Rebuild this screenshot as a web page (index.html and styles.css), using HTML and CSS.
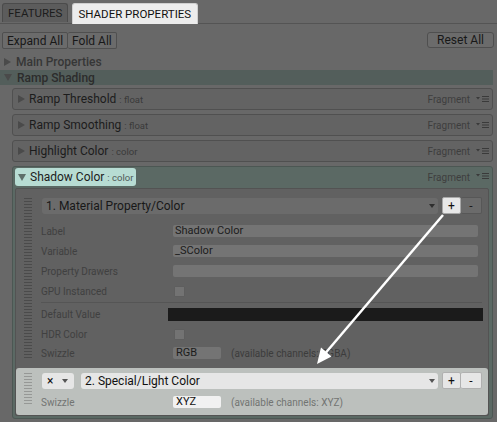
FILE: index.html
```html
<!DOCTYPE html>
<html>
<head>
<meta charset="utf-8">
<link rel="stylesheet" href="styles.css">
</head>
<body>
<div class="tabs">
  <div class="tab">FEATURES</div>
  <div class="tab active">SHADER PROPERTIES</div>
</div>
<div class="toolbar">
  <div class="btn-group">
    <div class="btn">Expand All</div>
    <div class="btn">Fold All</div>
  </div>
  <div class="btn reset">Reset All</div>
</div>
<div class="section"><span class="tri right"></span>Main Properties</div>
<div class="section open"><span class="tri down"></span>Ramp Shading</div>
<div class="props">
  <div class="card">
    <div class="card-head">
      <span class="tri right"></span><span class="name">Ramp Threshold</span><span class="type">: float</span>
      <span class="spacer"></span><span class="frag">Fragment</span>
      <svg class="menu" width="13" height="8" viewBox="0 0 13 8"><path d="M0 2h4l-2 2.5z" fill="currentColor"/><path d="M6 1.5h7M6 4h7M6 6.5h7" stroke="currentColor" stroke-width="1.2"/></svg>
    </div>
  </div>
  <div class="card">
    <div class="card-head">
      <span class="tri right"></span><span class="name">Ramp Smoothing</span><span class="type">: float</span>
      <span class="spacer"></span><span class="frag">Fragment</span>
      <svg class="menu" width="13" height="8" viewBox="0 0 13 8"><path d="M0 2h4l-2 2.5z" fill="currentColor"/><path d="M6 1.5h7M6 4h7M6 6.5h7" stroke="currentColor" stroke-width="1.2"/></svg>
    </div>
  </div>
  <div class="card">
    <div class="card-head">
      <span class="tri right"></span><span class="name">Highlight Color</span><span class="type">: color</span>
      <span class="spacer"></span><span class="frag">Fragment</span>
      <svg class="menu" width="13" height="8" viewBox="0 0 13 8"><path d="M0 2h4l-2 2.5z" fill="currentColor"/><path d="M6 1.5h7M6 4h7M6 6.5h7" stroke="currentColor" stroke-width="1.2"/></svg>
    </div>
  </div>
  <div class="card open">
    <div class="card-head">
      <span class="pill"><span class="tri down"></span><span class="name">Shadow Color</span><span class="type">: color</span></span>
      <span class="spacer"></span><span class="frag">Fragment</span>
      <svg class="menu" width="13" height="8" viewBox="0 0 13 8"><path d="M0 2h4l-2 2.5z" fill="currentColor"/><path d="M6 1.5h7M6 4h7M6 6.5h7" stroke="currentColor" stroke-width="1.2"/></svg>
    </div>
    <div class="list">
      <div class="node">
        <div class="handle"></div>
        <div class="node-content">
          <div class="node-top">
            <div class="dropdown"><span>1. Material Property/Color</span><span class="caret"></span></div>
            <div class="pm"><div class="pm-btn hl">+</div><div class="pm-btn">-</div></div>
          </div>
          <div class="fields">
            <div class="field"><span class="lbl">Label</span><div class="input">Shadow Color</div></div>
            <div class="field"><span class="lbl">Variable</span><div class="input">_SColor</div></div>
            <div class="field"><span class="lbl">Property Drawers</span><div class="input"></div></div>
            <div class="field"><span class="lbl">GPU Instanced</span><div class="check"></div></div>
          </div>
          <div class="sep"></div>
          <div class="fields after">
            <div class="field"><span class="lbl">Default Value</span><div class="colorbar"></div></div>
            <div class="field"><span class="lbl">HDR Color</span><div class="check"></div></div>
            <div class="field short-row"><span class="lbl">Swizzle</span><div class="swz"><div class="input short">RGB</div><span class="note">(available channels: RGBA)</span></div></div>
          </div>
        </div>
      </div>
      <div class="node light">
        <div class="handle"></div>
        <div class="node-content">
          <div class="node-top">
            <div class="dropdown mini"><span>×</span><span class="caret"></span></div>
            <div class="dropdown"><span>2. Special/Light Color</span><span class="caret"></span></div>
            <div class="pm"><div class="pm-btn">+</div><div class="pm-btn">-</div></div>
          </div>
          <div class="fields top3">
            <div class="field"><span class="lbl">Swizzle</span><div class="swz"><div class="input short">XYZ</div><span class="note">(available channels: XYZ)</span></div></div>
          </div>
        </div>
      </div>
    </div>
  </div>
</div>
<svg class="arrow" width="497" height="422" viewBox="0 0 497 422">
  <line x1="443" y1="215" x2="323" y2="356" stroke="#fff" stroke-width="2.5"/>
  <polygon points="317,364 331.5,356.5 321,347.5" fill="#fff"/>
</svg>
</body>
</html>
```
FILE: styles.css
```css
* { box-sizing: border-box; }
html, body { margin: 0; padding: 0; }
body {
  width: 497px;
  height: 422px;
  overflow: hidden;
  position: relative;
  background: #686868;
  font-family: Roboto, "Liberation Sans", sans-serif;
  font-size: 12px;
  color: #1c1c1c;
}
.tabs {
  display: flex;
  align-items: flex-end;
  gap: 4px;
  height: 24px;
  padding-left: 2px;
  border-bottom: 1px solid #545454;
}
.tab {
  height: 19px;
  padding: 0 5px 0 5px;
  display: flex;
  align-items: center;
  font-size: 11.5px;
  color: #1c1c1c;
  background: #5c5c5c;
  border: 1px solid #4b4b4b;
  border-bottom: none;
  border-radius: 3px 3px 0 0;
  margin-bottom: 1px;
}
.tab.active {
  height: 21px;
  padding: 0 6px 0 5px;
  margin-bottom: -1px;
  background: #ececec;
  border-color: #cfcfcf;
  color: #111;
}
.toolbar {
  display: flex;
  justify-content: space-between;
  margin-top: 8px;
  padding: 0 3px 0 2px;
}
.btn-group { display: flex; }
.btn {
  height: 17px;
  padding: 0 4px;
  display: flex;
  align-items: center;
  background: #6b6b6b;
  border: 1px solid #4f4f4f;
  border-radius: 2px;
  color: #181818;
  font-size: 12px;
}
.btn-group .btn + .btn { border-left: none; }
.btn.reset { padding: 0 9px; height: 16px; border-radius: 3px; }
.section {
  display: flex;
  align-items: center;
  height: 16px;
  margin-top: 5px;
  padding-left: 4px;
  color: #363636;
  font-weight: 500;
}
.section.open {
  margin-top: 0;
  height: 15px;
  width: 493px;
  background: #535e5b;
  color: #2c2c2c;
}
.tri {
  display: inline-block;
  width: 0;
  height: 0;
  margin-right: 5px;
}
.tri.right {
  border-top: 4px solid transparent;
  border-bottom: 4px solid transparent;
  border-left: 7px solid #4a4a4a;
}
.tri.down {
  border-left: 4px solid transparent;
  border-right: 4px solid transparent;
  border-top: 7px solid #4a4a4a;
}
.props {
  display: flex;
  flex-direction: column;
  gap: 4px;
  margin: 3px 4px 0 12px;
}
.card {
  background: #636363;
  border: 1px solid #505050;
  border-radius: 3px;
}
.card-head {
  display: flex;
  align-items: center;
  height: 20px;
  padding: 0 3px 0 5px;
}
.card-head .tri { margin-right: 4px; }
.name { font-size: 12px; color: #1c1c1c; }
.type { font-size: 9.5px; color: #3a3a3a; margin-left: 3px; padding-top: 1px; }
.spacer { flex: 1; }
.frag { font-size: 10px; color: #3e3e3e; margin-right: 6px; }
.menu { color: #3a3a3a; }
.card.open {
  background: #5b6964;
  border-color: #4c5753;
}
.card.open .card-head {
  height: 21px;
  padding-left: 2px;
  align-items: flex-start;
  padding-top: 1px;
}
.card.open .frag, .card.open .menu { margin-top: 4px; }
.pill {
  display: flex;
  align-items: center;
  height: 18px;
  padding: 0 3px;
  background: #b7dcd3;
  border-radius: 3px;
}
.pill .tri.down { border-top-color: #5d6e69; margin-right: 4px; }
.pill .type { color: #4e5a57; }
.list {
  margin: 0 3px 2px 2px;
  background: #616161;
  border: 1px solid #535353;
  border-radius: 2px;
}
.node {
  display: flex;
  padding: 8px 6px 4px 8px;
}
.handle {
  width: 8px;
  margin: 1px 9px 4px 0;
  background: repeating-linear-gradient(to bottom, #4b4b4b 0 1px, transparent 1px 3px);
}
.node-content { flex: 1; display: flex; flex-direction: column; }
.node-top {
  display: flex;
  align-items: flex-end;
  height: 17px;
}
.dropdown {
  flex: 1;
  height: 16px;
  display: flex;
  align-items: center;
  justify-content: space-between;
  padding: 0 3px 0 4px;
  margin-left: 1px;
  background: #6b6b6b;
  border-radius: 3px;
  color: #181818;
  font-size: 12px;
}
.caret {
  width: 0; height: 0;
  border-left: 3.5px solid transparent;
  border-right: 3.5px solid transparent;
  border-top: 4px solid #2e2e2e;
}
.pm { display: flex; margin-left: 4px; }
.pm-btn {
  width: 19px;
  height: 17px;
  display: flex;
  align-items: center;
  justify-content: center;
  background: #6b6b6b;
  border: 1px solid #575757;
  border-radius: 2px;
  font-size: 12px;
  color: #1c1c1c;
}
.pm-btn + .pm-btn { width: 21px; border-left: none; }
.pm-btn.hl { background: #e8e8e8; border-color: #a8a8a8; color: #111; }
.fields { margin-top: 7px; }
.fields.after { margin-top: 0; }
.field {
  display: grid;
  grid-template-columns: 132px 1fr;
  align-items: center;
  height: 20px;
}
.field.short-row { height: 18px; }
.lbl { font-size: 10px; color: #404040; }
.input {
  height: 12px;
  margin-right: 4px;
  padding-left: 2px;
  background: #747474;
  border-radius: 2px;
  font-size: 11px;
  line-height: 12px;
  color: #1c1c1c;
}
.check {
  width: 11px;
  height: 11px;
  margin-left: 1px;
  background: #737373;
  border: 1px solid #5e5e5e;
  border-radius: 1px;
}
.sep {
  height: 1px;
  margin: 1px 0 1px;
  background: #555;
}
.colorbar {
  height: 13px;
  margin-left: -5px;
  margin-right: -1px;
  background: #1b1b1b;
}
.swz { display: flex; align-items: center; }
.input.short { width: 48px; margin-right: 10px; padding-left: 3px; }
.note { font-size: 10px; color: #3c3c3c; }
.node.light {
  margin-top: 2px;
  padding: 4px 6px 3px 8px;
  background: #bcc0bd;
  border-radius: 3px;
}
.node.light .handle {
  margin: 1px 9px 6px 0;
  background: repeating-linear-gradient(to bottom, #969896 0 1px, transparent 1px 3px);
}
.node.light .dropdown { background: #e6e6e6; color: #111; }
.node.light .dropdown.mini { flex: 0 0 32px; margin-right: 6px; padding: 0 6px 0 5px; }
.node.light .caret { border-top-color: #555; }
.node.light .pm-btn { background: #e6e6e6; border-color: #b0b0b0; color: #111; }
.fields.top3 { margin-top: 3px; }
.node.light .lbl, .node.light .note { color: #727472; }
.node.light .input { background: #f1f1f1; color: #111; }
.arrow {
  position: absolute;
  left: 0;
  top: 0;
  pointer-events: none;
}
```
